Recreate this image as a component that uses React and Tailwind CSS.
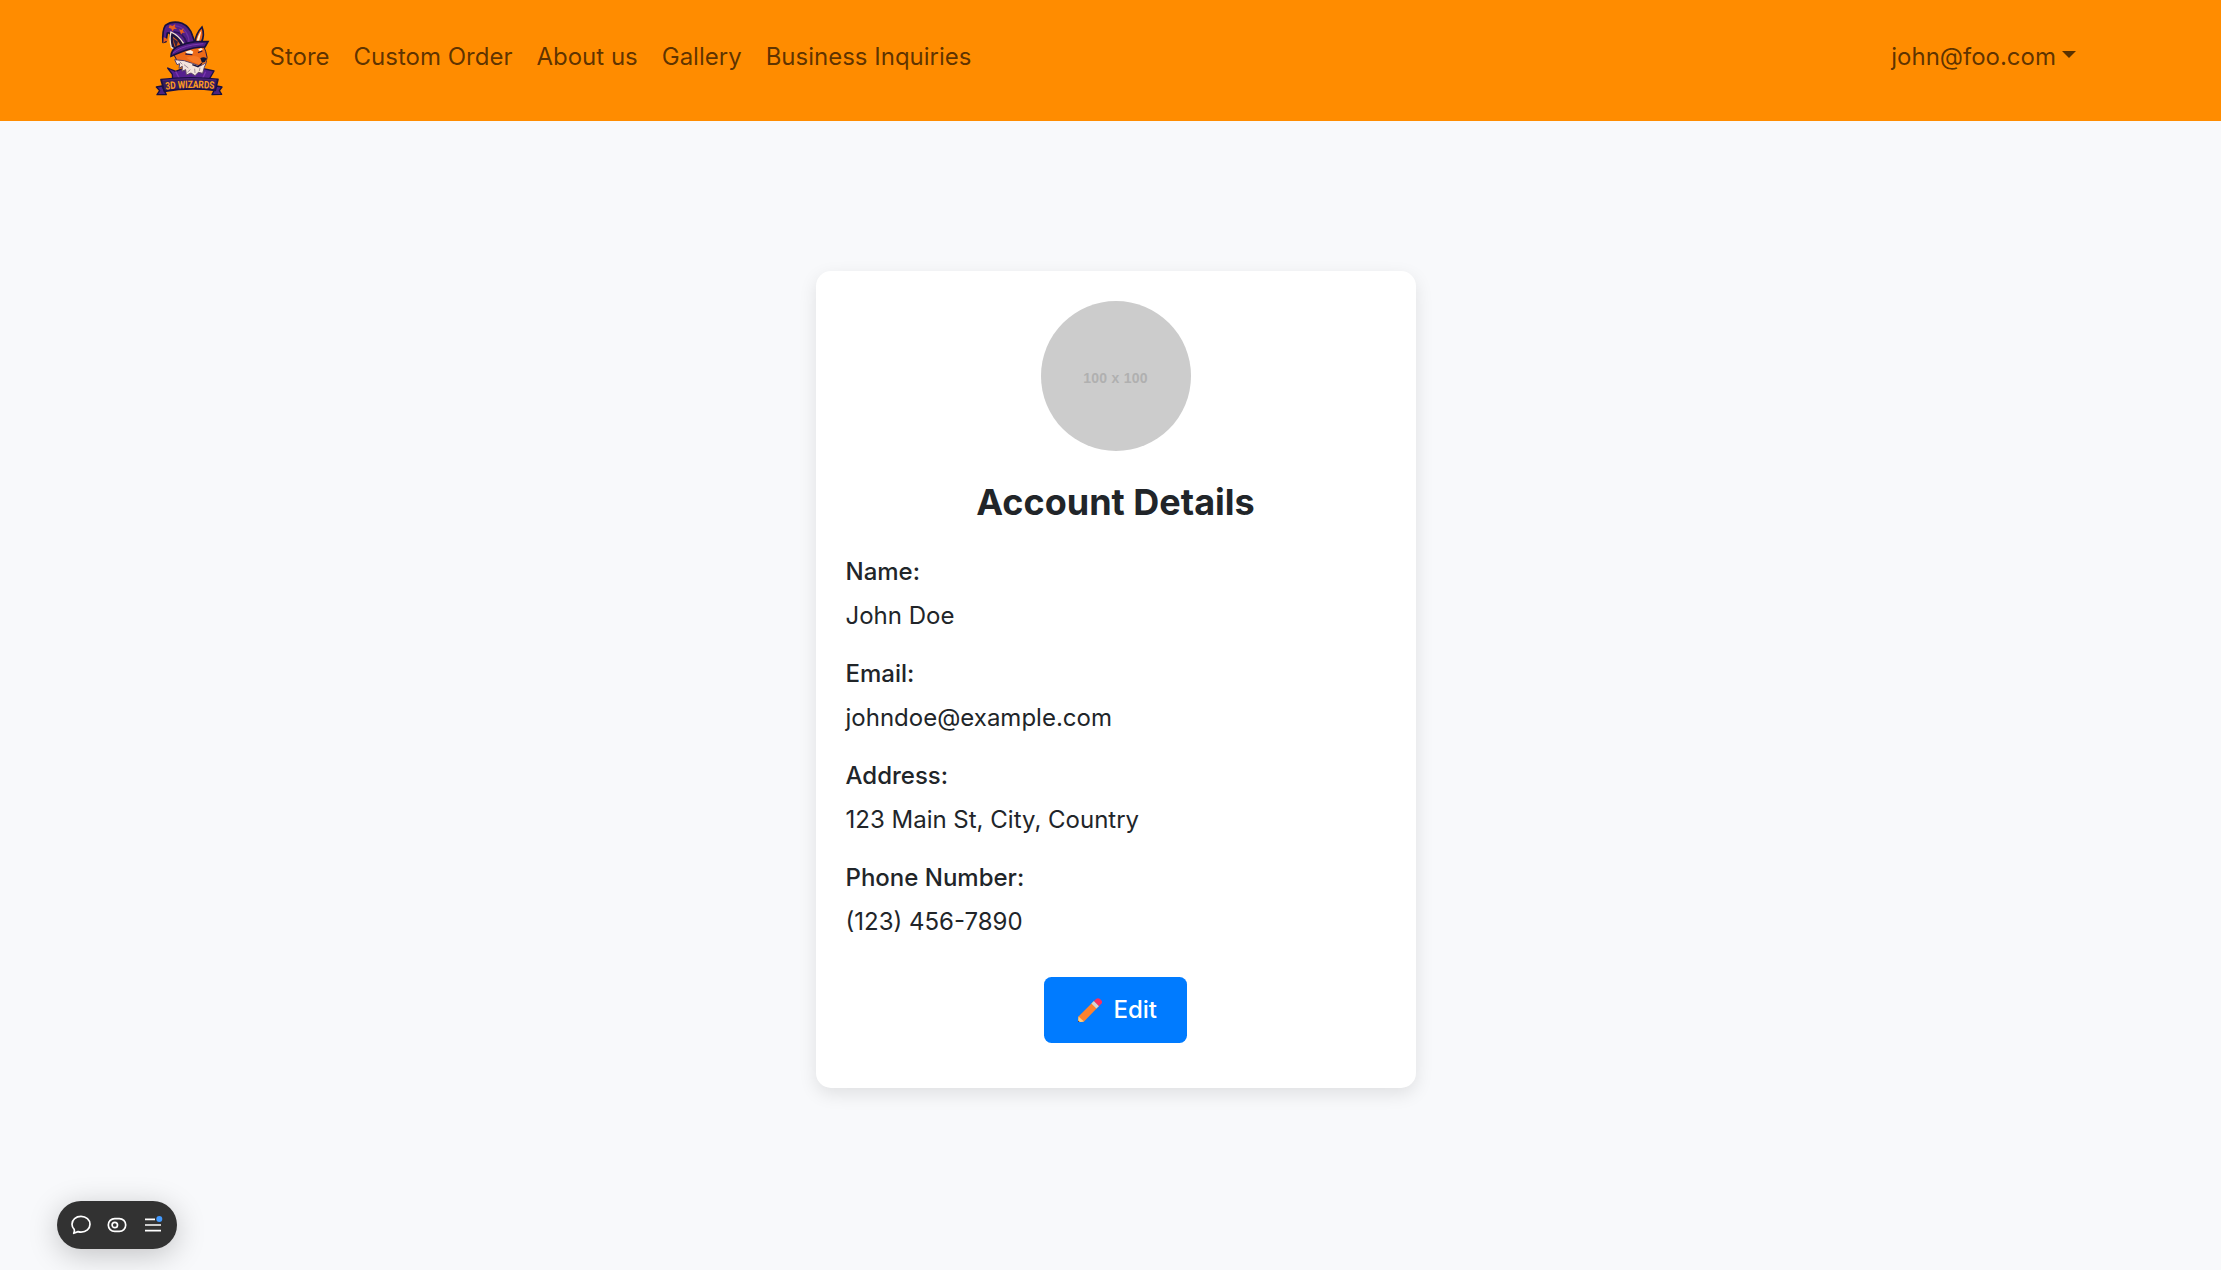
const links = ["Store", "Custom Order", "About us", "Gallery", "Business Inquiries"];

const details = [
  ["Name:", "John Doe"],
  ["Email:", "johndoe@example.com"],
  ["Address:", "123 Main St, City, Country"],
  ["Phone Number:", "(123) 456-7890"],
];

function Logo() {
  return (
    <svg className="h-[100px] w-[100px] shrink-0" viewBox="0 0 300 300" aria-label="3D Wizards">
      {/* collar */}
      <path d="M83 174 L107 184 L122 178 L190 176 L222 183 L207 209 L98 209 L97 193 Z" fill="#56208f" stroke="#1b1046" strokeWidth="4" strokeLinejoin="round" />
      <path d="M107 184 L119 207 M197 185 L187 207" stroke="#7a35b0" strokeWidth="4" fill="none" />
      {/* hat */}
      <path d="M69 97 Q66 62 76 46 Q98 30 126 40 Q149 50 157 76 L165 98 L109 124 L94 105 L91 77 Q92 67 82 69 L78 95 Z" fill="#532085" stroke="#17103f" strokeWidth="5" strokeLinejoin="round" />
      <path d="M91 51 Q119 40 138 67 Q148 82 147 98" stroke="#6d2fa0" strokeWidth="4" fill="none" />
      <path d="M101 66 Q128 64 140 98" stroke="#2c1457" strokeWidth="5" fill="none" />
      <path d="M89 45 l9 3 8-6 -2 9 7 5 -9 1 -5 7 -3-8 -8-3z M117 58 l7 2 7-5 -2 8 6 5 -8 0 -4 6 -2-8z M71 82 l8 3 6 8 -9 1 -6 5z" fill="#e8601d" />
      {/* ears */}
      <path d="M93 66 Q116 76 131 101 L112 122 L94 112 Q87 87 93 66 Z" fill="#21143c" stroke="#f3e2d2" strokeWidth="4" />
      <path d="M99 80 Q113 88 121 104 L107 116 Q98 101 99 80 Z" fill="#d8581a" />
      <path d="M98 84 L108 113 L114 95" fill="#32203f" />
      <path d="M186 51 Q195 74 184 98 L164 98 Q168 70 186 51 Z" fill="#f26817" stroke="#17143f" strokeWidth="5" />
      <path d="M184 62 L177 95 L170 96 Q172 77 184 62Z" fill="#fff2df" />
      {/* face */}
      <path d="M103 137 Q113 113 140 110 L190 106 L197 124 Q205 143 198 158 L181 169 L146 162 L126 155 L112 153 Z" fill="#ee6a17" stroke="#25163f" strokeWidth="3" />
      {/* neck fur */}
      <path d="M113 150 L104 149 L111 164 L119 161 L117 175 L127 169 L126 184 L137 179 L139 195 L153 189 L165 197 L175 187 L188 190 L193 172 L199 158 L180 168 L157 160 L133 152 Z" fill="#f4e4dc" stroke="#5b4163" strokeWidth="3" />
      {/* brim */}
      <path d="M93 139 Q93 120 111 110 Q139 98 166 95 L204 95 L195 111 Q160 111 129 124 Q109 132 93 139 Z" fill="#532085" stroke="#17103f" strokeWidth="5" />
      <path d="M99 129 Q119 112 157 105 L190 101" fill="none" stroke="#7d3ab0" strokeWidth="3" />
      {/* eyes and muzzle */}
      <path d="M136 125 L152 120 L160 125 L157 132 L143 133 Z M174 119 L183 114 L189 118 L180 124Z" fill="#fff2df" />
      <path d="M136 132 L157 134 M174 128 L187 123" stroke="#281744" strokeWidth="4" />
      <path d="M139 143 Q159 134 175 141 L185 151 L200 149 L197 158 L184 165 L159 156 Z" fill="#f77b27" />
      <path d="M181 145 Q190 138 200 145 L195 156 L186 158 Z" fill="#111635" />
      <path d="M186 160 L174 170 L157 164" stroke="#171239" strokeWidth="4" fill="none" />
      <path d="M132 164 L145 174 M142 187 L151 179 M164 176 L165 189 M180 173 L178 183 M119 155 L127 163" stroke="#a38f9f" strokeWidth="3" />
      {/* banner */}
      <path d="M49 231 L66 228 L79 254 L51 254 L59 242 Z M246 231 L229 228 L216 254 L245 253 L238 242 Z" fill="#4b237f" stroke="#17103e" strokeWidth="4" strokeLinejoin="round" />
      <path d="M63 209 Q147 198 234 208 L226 241 Q148 231 73 244 Z" fill="#351d60" stroke="#1b1044" strokeWidth="5" strokeLinejoin="round" />
      <path d="M68 211 Q149 201 229 210" fill="none" stroke="#5f2c90" strokeWidth="2" />
      <path id="banner-line" d="M77 239 Q149 230 224 237" fill="none" />
      <text className="font-['Roboto'] font-bold" fontSize="31" fill="#ff9c1c">
        <textPath href="#banner-line" textLength="146" lengthAdjust="spacingAndGlyphs">3D WIZARDS</textPath>
      </text>
    </svg>
  );
}

function Pencil() {
  return (
    <svg className="h-6 w-6" viewBox="0 0 24 24" aria-hidden="true">
      <path d="M.5 18.5 16 3 21 8 6 23.5.3 24.5Z" fill="#ff822d" />
      <path d="M.5 18.5 6 23.5 0 24.5Z" fill="#ffce7c" />
      <path d="M.1 22.6 2 24.3 0 24.7Z" fill="#483747" />
      <path d="M13.4 5.6 16 3 21 8 18.4 10.6Z" fill="#d3d3d3" />
      <path d="M16 3 18 1Q20-.5 22 1L23.5 2.5Q25 4.2 23.3 5.8L21 8Z" fill="#f8315f" />
    </svg>
  );
}

function Toolbar() {
  return (
    <div className="fixed bottom-[21px] left-[57px] flex h-12 w-[120px] items-center justify-between rounded-full bg-[#323232] px-3 text-white shadow-[0_6px_30px_rgba(0,0,0,0.22)]">
      <svg className="h-6 w-6" viewBox="0 0 24 24" fill="none" stroke="currentColor" strokeWidth="1.7" strokeLinejoin="round">
        <path d="M5.2 16.3C3.7 14.9 3 13.2 3 11.2 3 6.8 6.9 3.4 12 3.4s9 3.5 9 7.9-3.9 7.8-9 7.8c-1.1 0-2.1-.2-3-.5L4.7 20.3Q5.9 18 5.2 16.3Z" />
      </svg>
      <svg className="h-6 w-6" viewBox="0 0 24 24" fill="none" stroke="currentColor" strokeWidth="1.7">
        <rect x="3.3" y="5.6" width="17.4" height="12.8" rx="6.4" />
        <circle cx="9.8" cy="12" r="2.7" />
      </svg>
      <svg className="h-6 w-6" viewBox="0 0 24 24" fill="none" stroke="currentColor" strokeWidth="1.7">
        <path d="M4 6.3h10M4 12h16M4 17.7h16" />
        <circle cx="18.3" cy="6" r="3" fill="#429aff" stroke="none" />
      </svg>
    </div>
  );
}

export default function App() {
  return (
    <div className="flex h-screen flex-col bg-[#f8f9fb] font-['Inter',sans-serif] text-2xl leading-9 text-[#212529]">
      <header className="flex h-[121px] shrink-0 items-start bg-[#ff8c00] pr-[145px] pl-[140px] pt-2.5 text-black/65">
        <Logo />
        <nav className="ml-[29.5px] mt-[29px] flex gap-6">
          {links.map((label) => (
            <a key={label} href="#" className="whitespace-nowrap">{label}</a>
          ))}
        </nav>
        <button type="button" className="ml-auto mt-[29px] flex items-center gap-1.5">
          john@foo.com
          <svg className="-mt-1.5 h-[7px] w-3.5" viewBox="0 0 14 7" fill="currentColor"><path d="M0 0h14L7 7Z" /></svg>
        </button>
      </header>
      <main className="flex flex-1 items-start justify-center pt-[150px] pl-[10px]">
        <section className="flex h-[817px] w-[600px] flex-col items-center rounded-[15px] bg-white p-[30px] shadow-[0_6px_18px_rgba(0,0,0,0.1)]">
          <div className="flex h-[150px] w-[150px] shrink-0 items-center justify-center rounded-full bg-[#ccc] pt-[3px] font-['Liberation_Sans',sans-serif] text-[14px] font-bold tracking-[0.25px] text-[#b0b0b0]">
            100 x 100
          </div>
          <h1 className="mt-[30px] text-4xl leading-[43px] font-bold">Account Details</h1>
          <dl className="mt-[30px] flex w-full flex-col gap-[22px]">
            {details.map(([label, value]) => (
              <div key={label} className="flex flex-col gap-2">
                <dt className="font-medium">{label}</dt>
                <dd>{value}</dd>
              </div>
            ))}
          </dl>
          <button type="button" className="mt-[37px] mr-px flex h-[66px] w-[143px] items-center gap-3 rounded-[7.5px] bg-[#007bff] pl-[34px] font-medium text-white">
            <Pencil />
            Edit
          </button>
        </section>
      </main>
      <Toolbar />
    </div>
  );
}
